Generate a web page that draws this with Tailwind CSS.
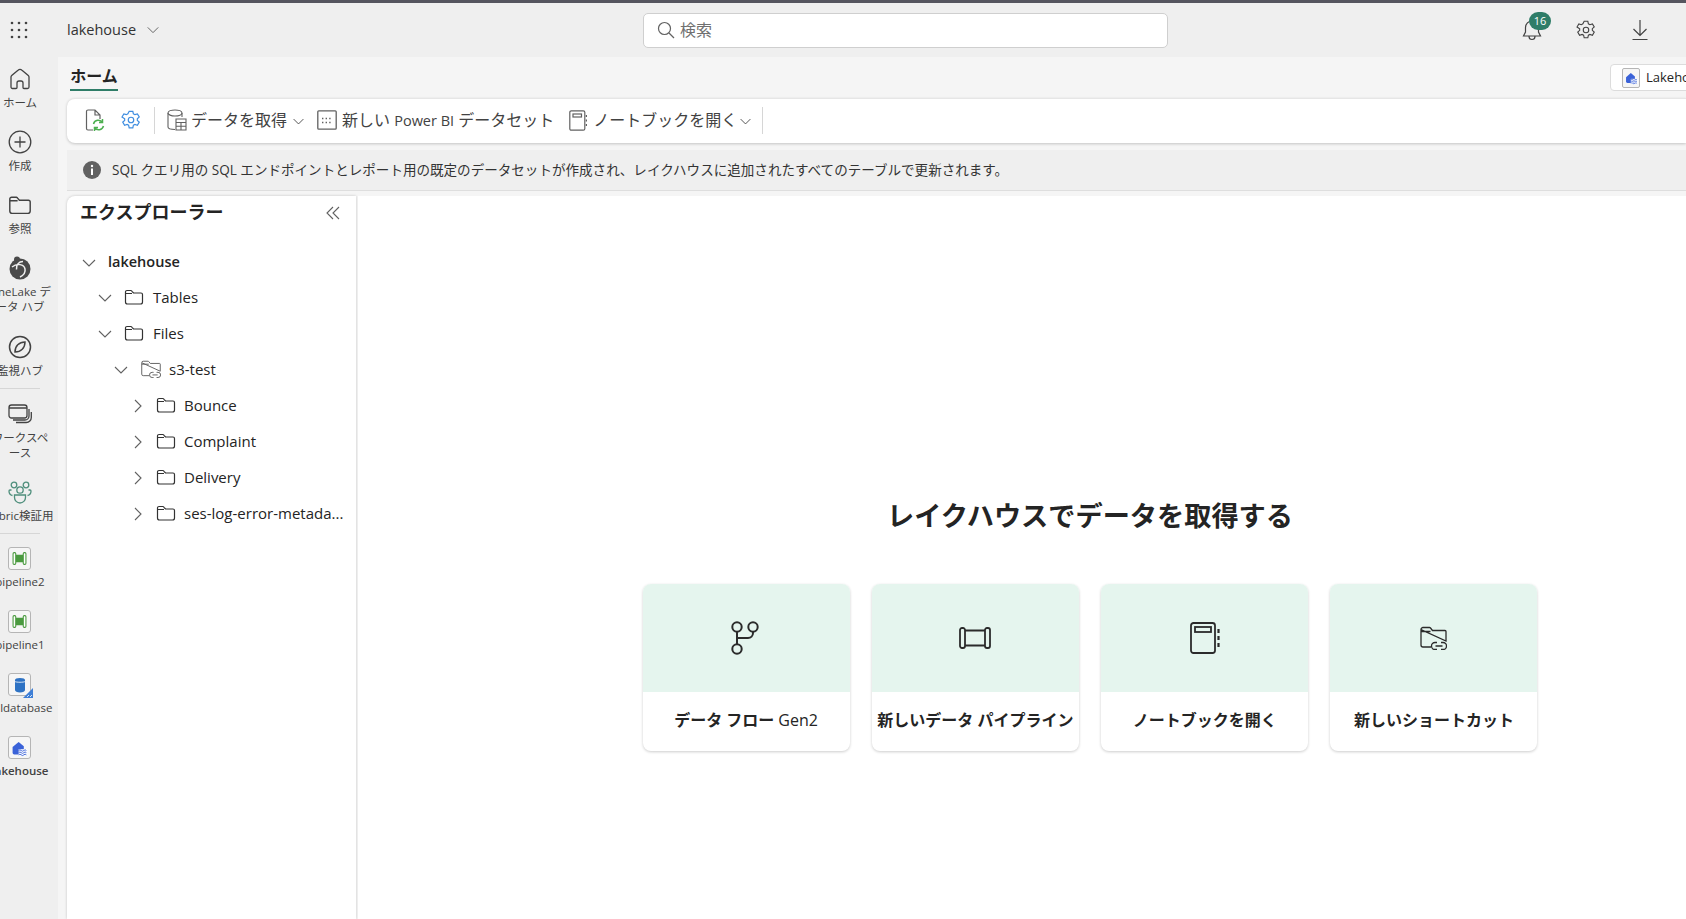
<!DOCTYPE html>
<html lang="ja">
<head>
  <meta charset="UTF-8">
  <title>lakehouse</title>
  <script src="https://cdn.jsdelivr.net/npm/@tailwindcss/browser@4"></script>
</head>
<body class="font-['Open_Sans','Noto_Sans_CJK_JP',sans-serif] text-[#242424]">
  <svg class="hidden">
    <symbol id="folder" viewBox="0 0 20 16"><path fill="none" stroke="currentColor" stroke-width="1.2" d="M1.5 3V13a2 2 0 0 0 2 2H16.5a2 2 0 0 0 2-2V5.5a1.5 1.5 0 0 0-1.5-1.5H9.5L8 2.3A1.5 1.5 0 0 0 7 1.5H3A1.5 1.5 0 0 0 1.5 3ZM1.5 4.5H8"/></symbol>
    <symbol id="down" viewBox="0 0 16 16"><path fill="none" stroke="currentColor" stroke-width="1.1" d="M2 5l6 6 6-6"/></symbol>
    <symbol id="right" viewBox="0 0 16 16"><path fill="none" stroke="currentColor" stroke-width="1.1" d="M5 2l6 6-6 6"/></symbol>
    <symbol id="linkfolder" viewBox="0 0 27 24"><path fill="none" stroke="currentColor" stroke-width="1.3" d="M1 4V19a2 2 0 0 0 2 2H11M26 15V5.5a1 1 0 0 0-1-1H12.5L10.5 2a1.500 1.500 0 0 0-1-.5H3a2 2 0 0 0-2 2ZM1 5.500H10.500M17 16.500h-2a3.500 3.500 0 0 0 0 7h2M21 16.500h2a3.500 3.500 0 0 1 0 7h-2M15.500 20h7"/></symbol>
    <symbol id="lake" viewBox="0 0 22 22"><path fill="#3a62d8" d="M3 10.500L10 4.500L16 9.500V19H5a2 2 0 0 1-2-2Z"/><path fill="#fff" d="M10 13h10v7H10z"/><path fill="none" stroke="#3a62d8" stroke-width="1.1" d="M10 14.500q1.500-1.600 3 0t3 0 3 0M10 17q1.500-1.600 3 0t3 0 3 0M10 19.500q1.500-1.600 3 0t3 0 3 0"/></symbol>
  </svg>

  <div class="w-[1686px] h-[919px] overflow-hidden flex flex-col bg-[#efefef]">
    <!-- Top bar -->
    <div class="h-[3px] bg-[#55555f] shrink-0"></div>
    <div class="h-[54px] shrink-0 flex items-center relative">
      <svg class="ml-[10px] w-[18px] h-[18px] text-[#424242]" viewBox="0 0 18 18" fill="currentColor">
        <circle cx="2" cy="2" r="1.300"/><circle cx="9" cy="2" r="1.300"/><circle cx="16" cy="2" r="1.300"/>
        <circle cx="2" cy="9" r="1.300"/><circle cx="9" cy="9" r="1.300"/><circle cx="16" cy="9" r="1.300"/>
        <circle cx="2" cy="16" r="1.300"/><circle cx="9" cy="16" r="1.300"/><circle cx="16" cy="16" r="1.300"/>
      </svg>
      <span class="ml-[39px] text-[14.5px] text-[#333]">lakehouse</span>
      <svg class="ml-[10px] w-[14px] h-[14px] text-[#616161]"><use href="#down"/></svg>

      <div class="ml-[483px] w-[525px] h-[35px] bg-white border border-[#cfcfcf] rounded-[5px] flex items-center shrink-0">
        <svg class="ml-[13px] w-[18px] h-[18px] text-[#616161]" viewBox="0 0 18 18" fill="none" stroke="currentColor" stroke-width="1.200"><circle cx="7.500" cy="7.500" r="6"/><path d="M12 12l5 5"/></svg>
        <span class="ml-[5px] text-[16px] text-[#707070]">検索</span>
      </div>

      <div class="relative ml-[352px] w-[24px] h-[24px]">
        <svg class="w-[24px] h-[24px] text-[#424242]" viewBox="0 0 24 24" fill="none" stroke="currentColor" stroke-width="1.200"><path d="M12 3a6.500 6.500 0 0 0-6.500 6.500V14L3.500 18h17l-2-4V9.500A6.500 6.500 0 0 0 12 3ZM9 18.500a3 3 0 0 0 6 0"/></svg>
        <span class="absolute left-[9px] top-[-6px] w-[22px] h-[18px] rounded-full bg-[#2f7d68] text-white text-[11px] leading-[18px] text-center">16</span>
      </div>
      <svg class="ml-[31px] w-[22px] h-[22px] text-[#424242]" viewBox="0 0 24 24" fill="none" stroke="currentColor" stroke-width="1.200"><circle cx="12" cy="12" r="3"/><path d="M10 2.500h4l.6 2.800 1.700.9 2.700-.9 2 3.400-2.100 1.900v1.800l2.100 1.900-2 3.400-2.700-.9-1.700.9-.6 2.800h-4l-.6-2.800-1.700-.9-2.700.9-2-3.400 2.100-1.900v-1.800L2.200 8.700l2-3.400 2.700.9 1.700-.9Z"/></svg>
      <svg class="ml-[32px] w-[22px] h-[22px] text-[#424242]" viewBox="0 0 22 22" fill="none" stroke="currentColor" stroke-width="1.200"><path d="M11 1v15M4.500 10l6.500 6.500 6.500-6.500M3.500 20.500h15"/></svg>
    </div>

    <div class="flex flex-1 min-h-0">
      <!-- Left rail -->
      <div class="w-[58px] shrink-0 overflow-hidden">
        <div class="w-[78px] ml-[-19px] pt-[10px] flex flex-col items-center text-[11.5px] leading-[15px] text-[#424242] text-center">
          <div class="flex flex-col items-center gap-1 pb-[20px]">
            <svg class="w-6 h-6" viewBox="0 0 24 24" fill="none" stroke="currentColor" stroke-width="1.300"><path d="M10 3.200a3 3 0 0 1 4 0l6.300 5.300a2 2 0 0 1 .7 1.500V20a1.500 1.500 0 0 1-1.500 1.500H16a1 1 0 0 1-1-1V16a2 2 0 0 0-2-2h-2a2 2 0 0 0-2 2v4.500a1 1 0 0 1-1 1H4.500A1.500 1.500 0 0 1 3 20V10a2 2 0 0 1 .7-1.500Z"/></svg>
            <span>ホーム</span>
          </div>
          <div class="flex flex-col items-center gap-1 pb-[20px]">
            <svg class="w-6 h-6" viewBox="0 0 24 24" fill="none" stroke="currentColor" stroke-width="1.300"><circle cx="12" cy="12" r="10.800"/><path d="M12 6.500v11M6.500 12h11"/></svg>
            <span>作成</span>
          </div>
          <div class="flex flex-col items-center gap-1 pb-[20px]">
            <svg class="w-6 h-6" viewBox="0 0 20 16"><use href="#folder"/></svg>
            <span>参照</span>
          </div>
          <div class="flex flex-col items-center gap-1 pb-[21px]">
            <svg class="w-6 h-6" viewBox="0 0 24 24"><circle cx="12" cy="13" r="10.500" fill="#4a4a4a"/><circle cx="9" cy="3.500" r="3" fill="#4a4a4a"/><path fill="none" stroke="#efefef" stroke-width="1.500" d="M4 11c5-4 12-3 13 2s-3 7-5 8M15 5.500c-4 0-7 3-6.500 8"/></svg>
            <span class="w-[64px]">OneLake データ ハブ</span>
          </div>
          <div class="flex flex-col items-center gap-1 pb-[10px]">
            <svg class="w-6 h-6" viewBox="0 0 24 24" fill="none" stroke="#424242" stroke-width="1.500"><circle cx="12" cy="12" r="10.500"/><path d="M7 17c0-6 4-10 10-10 0 6-4 10-10 10Z"/></svg>
            <span>監視ハブ</span>
          </div>
          <div class="w-10 h-px bg-[#d6d6d6] mb-[13px]"></div>
          <div class="flex flex-col items-center gap-1 pb-[20px]">
            <svg class="w-6 h-6" viewBox="0 0 24 24" fill="none" stroke="currentColor" stroke-width="1.300"><rect x="1" y="3" width="18" height="13" rx="2.500"/><path d="M1 6h18M21 7v7a4 4 0 0 1-4 4H5M23.300 10v5.500a5 5 0 0 1-5 5H8"/></svg>
            <span class="w-[64px]">ワークスペース</span>
          </div>
          <div class="flex flex-col items-center gap-1 pb-[10px]">
            <svg class="w-6 h-6" viewBox="0 0 24 24" fill="none" stroke="#4f8f7c" stroke-width="1.300"><circle cx="6" cy="5" r="2.800"/><circle cx="18" cy="5" r="2.800"/><circle cx="12" cy="10" r="3.200"/><path d="M3.500 10H2a1 1 0 0 0-1 1c0 2 1 4 3.500 4.500M20.500 10H22a1 1 0 0 1 1 1c0 2-1 4-3.500 4.500M6.500 15h11v2.500a5.500 5.500 0 0 1-11 0Z"/></svg>
            <span class="whitespace-nowrap">Fabric検証用</span>
          </div>
          <div class="w-10 h-px bg-[#d6d6d6] mb-[13px]"></div>
          <div class="flex flex-col items-center gap-1 pb-[21px]">
            <div class="w-[23px] h-[23px] rounded-[3px] border border-[#b5b5b5] bg-[#f6f6f6] flex items-center justify-center">
              <svg class="w-[15px] h-[15px]" viewBox="0 0 14 14"><rect x="3" y="3.500" width="8" height="7" fill="#4a9a3f"/><rect x="1" y="1.500" width="2.500" height="11" rx="1" fill="#fff" stroke="#4a9a3f"/><rect x="10.500" y="1.500" width="2.500" height="11" rx="1" fill="#fff" stroke="#4a9a3f"/></svg>
            </div>
            <span>pipeline2</span>
          </div>
          <div class="flex flex-col items-center gap-1 pb-[21px]">
            <div class="w-[23px] h-[23px] rounded-[3px] border border-[#b5b5b5] bg-[#f6f6f6] flex items-center justify-center">
              <svg class="w-[15px] h-[15px]" viewBox="0 0 14 14"><rect x="3" y="3.500" width="8" height="7" fill="#4a9a3f"/><rect x="1" y="1.500" width="2.500" height="11" rx="1" fill="#fff" stroke="#4a9a3f"/><rect x="10.500" y="1.500" width="2.500" height="11" rx="1" fill="#fff" stroke="#4a9a3f"/></svg>
            </div>
            <span>pipeline1</span>
          </div>
          <div class="flex flex-col items-center gap-1 pb-[21px]">
            <div class="relative w-[23px] h-[23px] rounded-[3px] border border-[#b5b5b5] bg-[#f6f6f6] flex items-center justify-center">
              <svg class="w-[14px] h-[16px]" viewBox="0 0 14 16"><path fill="#2f73c4" d="M2 3h10v10c0 1.500-2 2.500-5 2.500S2 14.500 2 13Z"/><ellipse cx="7" cy="3" rx="5" ry="2" fill="#2f73c4"/><path fill="none" stroke="#fff" stroke-width=".8" d="M2 4.500c1 1 9 1 10 0"/></svg>
              <svg class="absolute left-[14px] top-[14px] w-[10px] h-[10px]" viewBox="0 0 10 10"><path fill="#3f7fd6" d="M10 0v10H0Z"/><path stroke="#fff" stroke-width=".8" d="M4 9l2-2M7 9l2-2"/></svg>
            </div>
            <span>sqldatabase</span>
          </div>
          <div class="flex flex-col items-center gap-1 pb-[20px]">
            <div class="w-[23px] h-[23px] rounded-[3px] border border-[#b5b5b5] bg-[#f6f6f6] flex items-center justify-center">
              <svg class="w-[19px] h-[19px]"><use href="#lake"/></svg>
            </div>
            <span class="font-semibold">lakehouse</span>
          </div>
        </div>
      </div>

      <!-- Content -->
      <div class="flex-1 min-w-0 overflow-hidden flex flex-col bg-[#f5f5f5] pl-[9px]">
        <!-- Tab row -->
        <div class="h-[41px] w-[1663px] shrink-0 flex items-start">
          <div class="ml-[3px] mt-[8px] w-[48px] h-[26px] border-b-[2px] border-[#2f7d68] text-[16px] leading-[22px] font-bold text-center whitespace-nowrap">ホーム</div>
          <div class="ml-auto mt-[7px] w-[120px] h-[27px] bg-white border border-[#dcdcdc] rounded-[4px] flex items-center pl-[11px] text-[13px] shrink-0">
            <div class="w-[18px] h-[20px] rounded-[2px] border border-[#b5b5b5] bg-[#f6f6f6] flex items-center justify-center"><svg class="w-[15px] h-[15px]"><use href="#lake"/></svg></div>
            <span class="ml-[6px]">Lakehouse</span>
          </div>
        </div>

        <!-- Toolbar -->
        <div class="h-[45px] shrink-0 bg-white rounded-l-[8px] border-t border-[#e6e6e6] shadow-[0_1px_3px_rgba(0,0,0,0.2)] flex items-center pb-[2px] text-[16px] text-[#424242] whitespace-nowrap">
          <svg class="ml-[18px] w-[20px] h-[23px]" viewBox="0 0 20 23" fill="none"><path stroke="#616161" stroke-width="1.200" d="M8 21H3a1.500 1.500 0 0 1-1.500-1.500v-17A1.500 1.500 0 0 1 3 1h7l5 5v4M10 1v5h5"/><path stroke="#4caf50" stroke-width="1.500" d="M8.500 15a5 5 0 0 1 9-1.500M18.500 17a5 5 0 0 1-9 1.500M17.500 10v3.500H14M9.500 22v-3.500H13"/></svg>
          <svg class="ml-[15px] w-[22px] h-[22px] text-[#3e8de0]" viewBox="0 0 24 24" fill="none" stroke="currentColor" stroke-width="1.300"><circle cx="12" cy="12" r="3"/><path d="M10 2.500h4l.6 2.800 1.700.9 2.700-.9 2 3.400-2.100 1.900v1.800l2.100 1.900-2 3.400-2.700-.9-1.700.9-.6 2.800h-4l-.6-2.800-1.700-.9-2.700.9-2-3.400 2.100-1.900v-1.800L2.200 8.700l2-3.400 2.700.9 1.700-.9Z"/></svg>
          <div class="ml-[12px] w-px h-[27px] bg-[#d6d6d6]"></div>
          <svg class="ml-[12px] w-[20px] h-[22px] text-[#616161]" viewBox="0 0 20 22" fill="none" stroke="currentColor" stroke-width="1.100"><path d="M1 4v14c0 1.500 3 2.500 7 2.500M15 4v4"/><ellipse cx="8" cy="4" rx="7" ry="3"/><path d="M9 10h10v11H9zM9 13.500h10M9 17.200h10M14 13.500V21"/></svg>
          <span class="ml-[4px]">データを取得</span>
          <svg class="ml-[5px] w-[13px] h-[13px] mt-[3px] text-[#424242]"><use href="#down"/></svg>
          <svg class="ml-[12px] w-[20px] h-[20px] text-[#616161]" viewBox="0 0 20 20" fill="none" stroke="currentColor"><rect x=".8" y=".8" width="18.400" height="18.400" rx="1" stroke-width="1.300"/><path stroke-width="1.400" stroke-dasharray="1.400 2.200" d="M5 8.500h10M5 12.500h10"/></svg>
          <span class="ml-[5px]">新しい <span class="text-[14.5px]">Power BI</span> データセット</span>
          <svg class="ml-[15px] w-[18px] h-[21px] text-[#616161]" viewBox="0 0 18 21" fill="none" stroke="currentColor" stroke-width="1.200"><rect x=".8" y=".8" width="15" height="19.400" rx="1.500"/><rect x="4" y="4" width="8.500" height="3"/><path stroke-width="1.500" d="M17.500 5v2M17.500 9.500v2M17.500 14v2"/></svg>
          <span class="ml-[6px]">ノートブックを開く</span>
          <svg class="ml-[2px] w-[13px] h-[13px] mt-[3px] text-[#424242]"><use href="#down"/></svg>
          <div class="ml-[10px] w-px h-[27px] bg-[#d6d6d6]"></div>
        </div>

        <!-- Info bar -->
        <div class="mt-[7px] h-[41px] shrink-0 bg-[#efefef] border-b border-[#dedede] flex items-center pl-[16px] text-[13.55px] text-[#333] whitespace-nowrap">
          <svg class="w-[18px] h-[18px]" viewBox="0 0 18 18"><circle cx="9" cy="9" r="9" fill="#616161"/><rect x="8" y="7.500" width="2" height="6.500" fill="#fff"/><circle cx="9" cy="5" r="1.200" fill="#fff"/></svg>
          <span class="ml-[11px]">SQL クエリ用の SQL エンドポイントとレポート用の既定のデータセットが作成され、レイクハウスに追加されたすべてのテーブルで更新されます。</span>
        </div>

        <!-- Panels -->
        <div class="mt-[5px] flex-1 min-h-0 flex gap-[2px]">
          <div class="w-[289px] shrink-0 bg-white rounded-tl-[8px] shadow-[0_0_3px_rgba(0,0,0,0.2)] pl-[14px]">
            <div class="h-[48px] flex items-start justify-between pr-[16px]">
              <span class="mt-[2px] -ml-[1px] text-[18px] leading-[28px] font-bold whitespace-nowrap">エクスプローラー</span>
              <svg class="mt-[10px] w-[14px] h-[14px] text-[#616161]" viewBox="0 0 14 14" fill="none" stroke="currentColor" stroke-width="1.100"><path d="M7 1L1 7l6 6M13 1L7 7l6 6"/></svg>
            </div>
            <div class="flex flex-col text-[15px] whitespace-nowrap">
              <div class="h-[35px] flex items-center"><svg class="mt-[2px] w-[16px] h-[16px] text-[#616161]"><use href="#down"/></svg><span class="ml-[11px] text-[14.5px] font-semibold">lakehouse</span></div>
              <div class="h-[36px] flex items-center pl-[16px]"><svg class="mt-[2px] w-[16px] h-[16px] text-[#616161]"><use href="#down"/></svg><svg class="ml-[11px] w-[20px] h-[16px] text-[#333]"><use href="#folder"/></svg><span class="ml-[9px]">Tables</span></div>
              <div class="h-[36px] flex items-center pl-[16px]"><svg class="mt-[2px] w-[16px] h-[16px] text-[#616161]"><use href="#down"/></svg><svg class="ml-[11px] w-[20px] h-[16px] text-[#333]"><use href="#folder"/></svg><span class="ml-[9px]">Files</span></div>
              <div class="h-[36px] flex items-center pl-[32px]"><svg class="mt-[2px] w-[16px] h-[16px] text-[#616161]"><use href="#down"/></svg><svg class="ml-[12px] w-[20px] h-[18px] text-[#616161]"><use href="#linkfolder"/></svg><span class="ml-[8px]">s3-test</span></div>
              <div class="h-[36px] flex items-center pl-[49px]"><svg class="mt-[2px] w-[16px] h-[16px] text-[#616161]"><use href="#right"/></svg><svg class="ml-[10px] w-[20px] h-[16px] text-[#333]"><use href="#folder"/></svg><span class="ml-[8px]">Bounce</span></div>
              <div class="h-[36px] flex items-center pl-[49px]"><svg class="mt-[2px] w-[16px] h-[16px] text-[#616161]"><use href="#right"/></svg><svg class="ml-[10px] w-[20px] h-[16px] text-[#333]"><use href="#folder"/></svg><span class="ml-[8px]">Complaint</span></div>
              <div class="h-[36px] flex items-center pl-[49px]"><svg class="mt-[2px] w-[16px] h-[16px] text-[#616161]"><use href="#right"/></svg><svg class="ml-[10px] w-[20px] h-[16px] text-[#333]"><use href="#folder"/></svg><span class="ml-[8px]">Delivery</span></div>
              <div class="h-[36px] flex items-center pl-[49px]"><svg class="mt-[2px] w-[16px] h-[16px] text-[#616161]"><use href="#right"/></svg><svg class="ml-[10px] w-[20px] h-[16px] text-[#333]"><use href="#folder"/></svg><span class="ml-[8px]">ses-log-error-metada...</span></div>
            </div>
          </div>

          <div class="w-[1464px] shrink-0 bg-white flex flex-col items-center pt-[302px]">
            <h1 class="text-[27.2px] leading-[36px] font-bold whitespace-nowrap">レイクハウスでデータを取得する</h1>
            <div class="mt-[50px] flex gap-[22.3px] text-[16px] font-semibold">
              <div class="w-[207px] h-[167px] rounded-[8px] overflow-hidden bg-white shadow-[0_1px_3px_rgba(0,0,0,0.2)] flex flex-col">
                <div class="h-[108px] bg-[#e5f5ee] flex items-center justify-center">
                  <svg class="w-[30px] h-[34px]" viewBox="0 0 30 34" fill="none" stroke="#2b2b2b" stroke-width="2"><circle cx="6" cy="6" r="4.700"/><circle cx="22" cy="6" r="4.700"/><circle cx="6" cy="28" r="4.700"/><path d="M6 10.700v12.600M6 17h11a5 5 0 0 0 5-5v-1.300"/></svg>
                </div>
                <div class="flex-1 flex items-center justify-center pb-[4px] whitespace-nowrap">データ フロー <span class="ml-[4px] font-normal">Gen2</span></div>
              </div>
              <div class="w-[207px] h-[167px] rounded-[8px] overflow-hidden bg-white shadow-[0_1px_3px_rgba(0,0,0,0.2)] flex flex-col">
                <div class="h-[108px] bg-[#e5f5ee] flex items-center justify-center">
                  <svg class="w-[32px] h-[22px]" viewBox="0 0 32 22" fill="none" stroke="#2b2b2b" stroke-width="1.800"><rect x="1" y="1" width="5" height="20" rx="2"/><rect x="26" y="1" width="5" height="20" rx="2"/><path d="M6 3.500h20M6 18.500h20"/></svg>
                </div>
                <div class="flex-1 flex items-center justify-center pb-[4px] whitespace-nowrap">新しいデータ パイプライン</div>
              </div>
              <div class="w-[207px] h-[167px] rounded-[8px] overflow-hidden bg-white shadow-[0_1px_3px_rgba(0,0,0,0.2)] flex flex-col">
                <div class="h-[108px] bg-[#e5f5ee] flex items-center justify-center">
                  <svg class="w-[30px] h-[32px]" viewBox="0 0 30 32" fill="none" stroke="#2b2b2b" stroke-width="1.800"><rect x="1" y="1" width="24" height="30" rx="2.500"/><rect x="5" y="5" width="16" height="5"/><path stroke-width="2.200" d="M28.500 7v4M28.500 14v4M28.500 21v4"/></svg>
                </div>
                <div class="flex-1 flex items-center justify-center pb-[4px] whitespace-nowrap">ノートブックを開く</div>
              </div>
              <div class="w-[207px] h-[167px] rounded-[8px] overflow-hidden bg-white shadow-[0_1px_3px_rgba(0,0,0,0.2)] flex flex-col">
                <div class="h-[108px] bg-[#e5f5ee] flex items-center justify-center">
                  <svg class="w-[27px] h-[24px] text-[#2b2b2b]"><use href="#linkfolder"/></svg>
                </div>
                <div class="flex-1 flex items-center justify-center pb-[4px] whitespace-nowrap">新しいショートカット</div>
              </div>
            </div>
          </div>
        </div>
      </div>
    </div>
  </div>
</body>
</html>
